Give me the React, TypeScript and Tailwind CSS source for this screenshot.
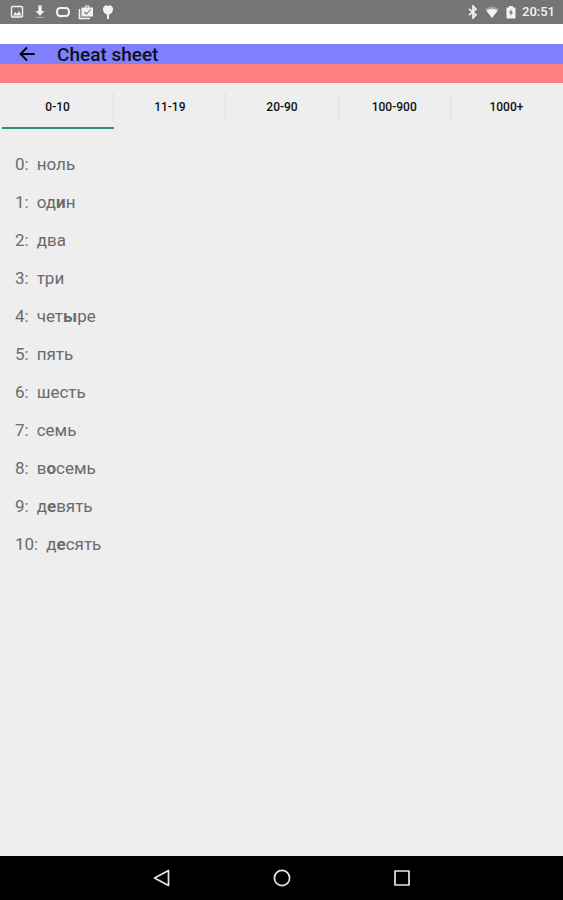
import { useState } from "react";
import clsx from "clsx";

const tabs = ["0-10", "11-19", "20-90", "100-900", "1000+"];

// [before, stressed vowel, after] - one-syllable words carry no stress mark
const words: [string, string, string][] = [
    ["ноль", "", ""],
    ["од", "и", "н"],
    ["два", "", ""],
    ["три", "", ""],
    ["чет", "ы", "ре"],
    ["пять", "", ""],
    ["шесть", "", ""],
    ["семь", "", ""],
    ["в", "о", "семь"],
    ["д", "е", "вять"],
    ["д", "е", "сять"],
];

function StatusBar() {
    return (
        <div className="flex h-6 items-center justify-between bg-[#757575] pl-2.5 pr-2 text-[#f2f2f2]">
            <div className="flex items-center gap-2">
                <svg className="h-3.5 w-3.5" viewBox="0 0 14 14" fill="none" stroke="currentColor">
                    <rect x="1.5" y="1.5" width="11" height="10.5" rx="1" strokeWidth="1.4" />
                    <path d="M3 10.5l2.3-3.5 1.7 2 2-3 2.5 4.5z" fill="currentColor" stroke="none" />
                </svg>
                <svg className="h-4 w-4" viewBox="0 0 16 16" fill="currentColor">
                    <path d="M6.3 1.5h3.4v5.5h2.8L8 11.8 3.5 7h2.8z" />
                    <path d="M4 13h8v1H4z" opacity=".4" />
                </svg>
                <svg className="h-3.5 w-3.5" viewBox="0 0 14 14" fill="none" stroke="currentColor" strokeWidth="2">
                    <path d="M4.5 3h5Q13 3 13 7t-3.5 4h-5Q1 11 1 7t3.5-4z" />
                    <path d="M3.5 11.5h3" strokeWidth="1.5" />
                </svg>
                <svg className="h-4 w-4" viewBox="0 0 16 16" fill="none" stroke="currentColor">
                    <path d="M1.5 5v9.5H12" strokeWidth="1.6" />
                    <path d="M3.5 3.5H7V1.5h4.5v2H15v9H3.5z" fill="currentColor" stroke="none" />
                    <path d="M8 2.5h2.5v1H8z" fill="#757575" stroke="none" />
                    <path d="M6.5 8l2 2 4-4.5" stroke="#757575" strokeWidth="1.1" />
                </svg>
                <svg className="h-4 w-3" viewBox="0 0 12 16" fill="currentColor">
                    <path d="M2.5 2Q3.5 .8 5 1.8h2Q8.5 .8 9.500 2q2 1.500 1.500 4Q10.500 9 8 10L7 11v4H5v-4L4 10Q1.500 9 1 6 .5 3.500 2.500 2z" />
                </svg>
            </div>
            <div className="flex items-center gap-[5px]">
                <svg className="h-3.5 w-3" viewBox="0 0 12 14" fill="none" stroke="currentColor" strokeWidth="1.7">
                    <path d="M2 3.8l7 6L6 13V1l3 3.2-7 6" />
                </svg>
                <svg className="h-3.5 w-4" viewBox="0 0 16 14">
                    <path d="M1 4Q8-1 15 4L8 13z" fill="#a0a0a0" />
                    <path d="M2.3 5.5Q8 2 13.7 5.5L8 13z" fill="currentColor" />
                </svg>
                <svg className="h-3.5 w-3" viewBox="0 0 12 14">
                    <path d="M4 1h4v1.5h2.5v11h-9v-11H4z" fill="currentColor" />
                    <path d="M6.500 4L4 8h1.500v3L8 7H6.500z" fill="#757575" />
                </svg>
                <span className="text-[13px] leading-4 font-medium">20:51</span>
            </div>
        </div>
    );
}

function Header() {
    return (
        <header className="mt-5 border-b-[19px] border-[#ff8080] bg-[#8080ff]">
            <div className="flex h-5 items-center gap-[21px] pl-[18px]">
                <button type="button" aria-label="Back">
                    <svg className="h-[18px] w-[18px]" viewBox="0 0 18 18" fill="none" stroke="#000" strokeWidth="1.8">
                        <path d="M16.5 9H3M9 2.5L2.5 9 9 15.5" />
                    </svg>
                </button>
                <h1 className="pt-0.5 text-[19px] leading-5 font-medium text-[#101018]">Cheat sheet</h1>
            </div>
        </header>
    );
}

function NavBar() {
    return (
        <nav className="flex h-11 items-center justify-center gap-[100px] bg-black text-[#e6e6e6]">
            <button type="button" aria-label="Back">
                <svg className="h-5 w-5" viewBox="0 0 20 20" fill="none" stroke="currentColor" strokeWidth="1.7" strokeLinejoin="round">
                    <path d="M16.5 2.5v15L2.5 10z" />
                </svg>
            </button>
            <button type="button" aria-label="Home">
                <svg className="h-5 w-5" viewBox="0 0 20 20" fill="none" stroke="currentColor" strokeWidth="1.7">
                    <circle cx="10" cy="10" r="7.6" />
                </svg>
            </button>
            <button type="button" aria-label="Overview">
                <svg className="h-5 w-5" viewBox="0 0 20 20" fill="none" stroke="currentColor" strokeWidth="1.7" strokeLinejoin="round">
                    <rect x="3" y="3" width="14" height="14" />
                </svg>
            </button>
        </nav>
    );
}

export default function App() {
    const [active, setActive] = useState(0);

    return (
        <div className="flex min-h-screen flex-col bg-white font-['Roboto',sans-serif]">
            <StatusBar />
            <Header />
            <main className="flex-1 bg-[#eeeeee]">
                <div role="tablist" className="flex pl-0.5">
                    {tabs.map((tab, i) => (
                        <button
                            key={tab}
                            type="button"
                            role="tab"
                            aria-selected={active === i}
                            onClick={() => setActive(i)}
                            className={clsx(
                                "flex-1 border-b-2 pt-[9px] pb-[5px]",
                                active === i ? "border-[#26917f]" : "border-transparent"
                            )}
                        >
                            <span
                                className={clsx(
                                    "block border-r py-2 text-xs leading-[14px] font-medium text-[#111111]",
                                    i < tabs.length - 1 ? "border-[#e0e0e0]" : "border-transparent"
                                )}
                            >
                                {tab}
                            </span>
                        </button>
                    ))}
                </div>
                <ul className="px-[15px] pt-4 text-[17px] leading-[38px] text-[#6b6b6b]">
                    {words.map(([before, stressed, after], n) => (
                        <li key={n} className="flex gap-2">
                            <span>{n}:</span>
                            <span>
                                {before}
                                <b>{stressed}</b>
                                {after}
                            </span>
                        </li>
                    ))}
                </ul>
            </main>
            <NavBar />
        </div>
    );
}
